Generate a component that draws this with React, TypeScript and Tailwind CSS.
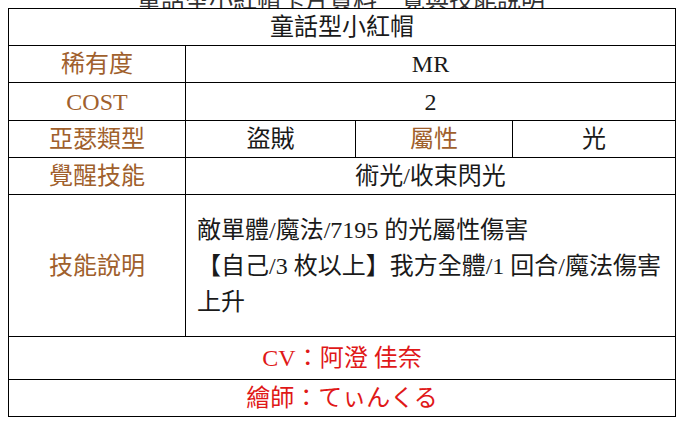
const serif = "font-['Liberation_Serif','Noto_Sans_CJK_TC',serif]"

const label = "text-[#a0602c]"
const cell = "border border-black text-center align-middle p-0"

export default function App() {
  return (
    <div className={`bg-white w-[682px] h-[427px] px-2 ${serif} text-[24px] leading-[30px] text-[#1a1a1a]`}>
      {/* heading line cut off by the top edge */}
      <div className="h-2 overflow-hidden flex flex-col justify-end">
        <div className="text-center text-[24px] leading-[28px] text-[#333] -mb-[6px]">
          童話型小紅帽卡片資料一覽與技能說明
        </div>
      </div>

      <table className="w-[667px] table-fixed border-collapse">
        <colgroup>
          <col className="w-[177px]" />
          <col className="w-[170px]" />
          <col className="w-[157px]" />
          <col className="w-[163px]" />
        </colgroup>
        <tbody>
          <tr className="h-[37px]">
            <td colSpan={4} className={cell}>童話型小紅帽</td>
          </tr>
          <tr className="h-[37px]">
            <td className={`${cell} ${label}`}>稀有度</td>
            <td colSpan={3} className={cell}>MR</td>
          </tr>
          <tr className="h-[38px]">
            <td className={`${cell} ${label}`}>COST</td>
            <td colSpan={3} className={cell}>2</td>
          </tr>
          <tr className="h-[37px]">
            <td className={`${cell} ${label}`}>亞瑟類型</td>
            <td className={cell}>盜賊</td>
            <td className={`${cell} ${label}`}>屬性</td>
            <td className={cell}>光</td>
          </tr>
          <tr className="h-[37px]">
            <td className={`${cell} ${label}`}>覺醒技能</td>
            <td colSpan={3} className={cell}>術光/收束閃光</td>
          </tr>
          <tr className="h-[142px]">
            <td className={`${cell} ${label}`}>技能說明</td>
            <td colSpan={3} className={`${cell} text-left pl-[11px] leading-[36px] whitespace-nowrap`}>
              敵單體/魔法/7195 的光屬性傷害
              <br />
              【自己/3 枚以上】我方全體/1 回合/魔法傷害
              <br />
              上升
            </td>
          </tr>
          <tr className="h-[43px]">
            <td colSpan={4} className={`${cell} text-[#e01818]`}>CV：阿澄 佳奈</td>
          </tr>
          <tr className="h-[37px]">
            <td colSpan={4} className={`${cell} text-[#e01818]`}>繪師：てぃんくる</td>
          </tr>
        </tbody>
      </table>
    </div>
  )
}
